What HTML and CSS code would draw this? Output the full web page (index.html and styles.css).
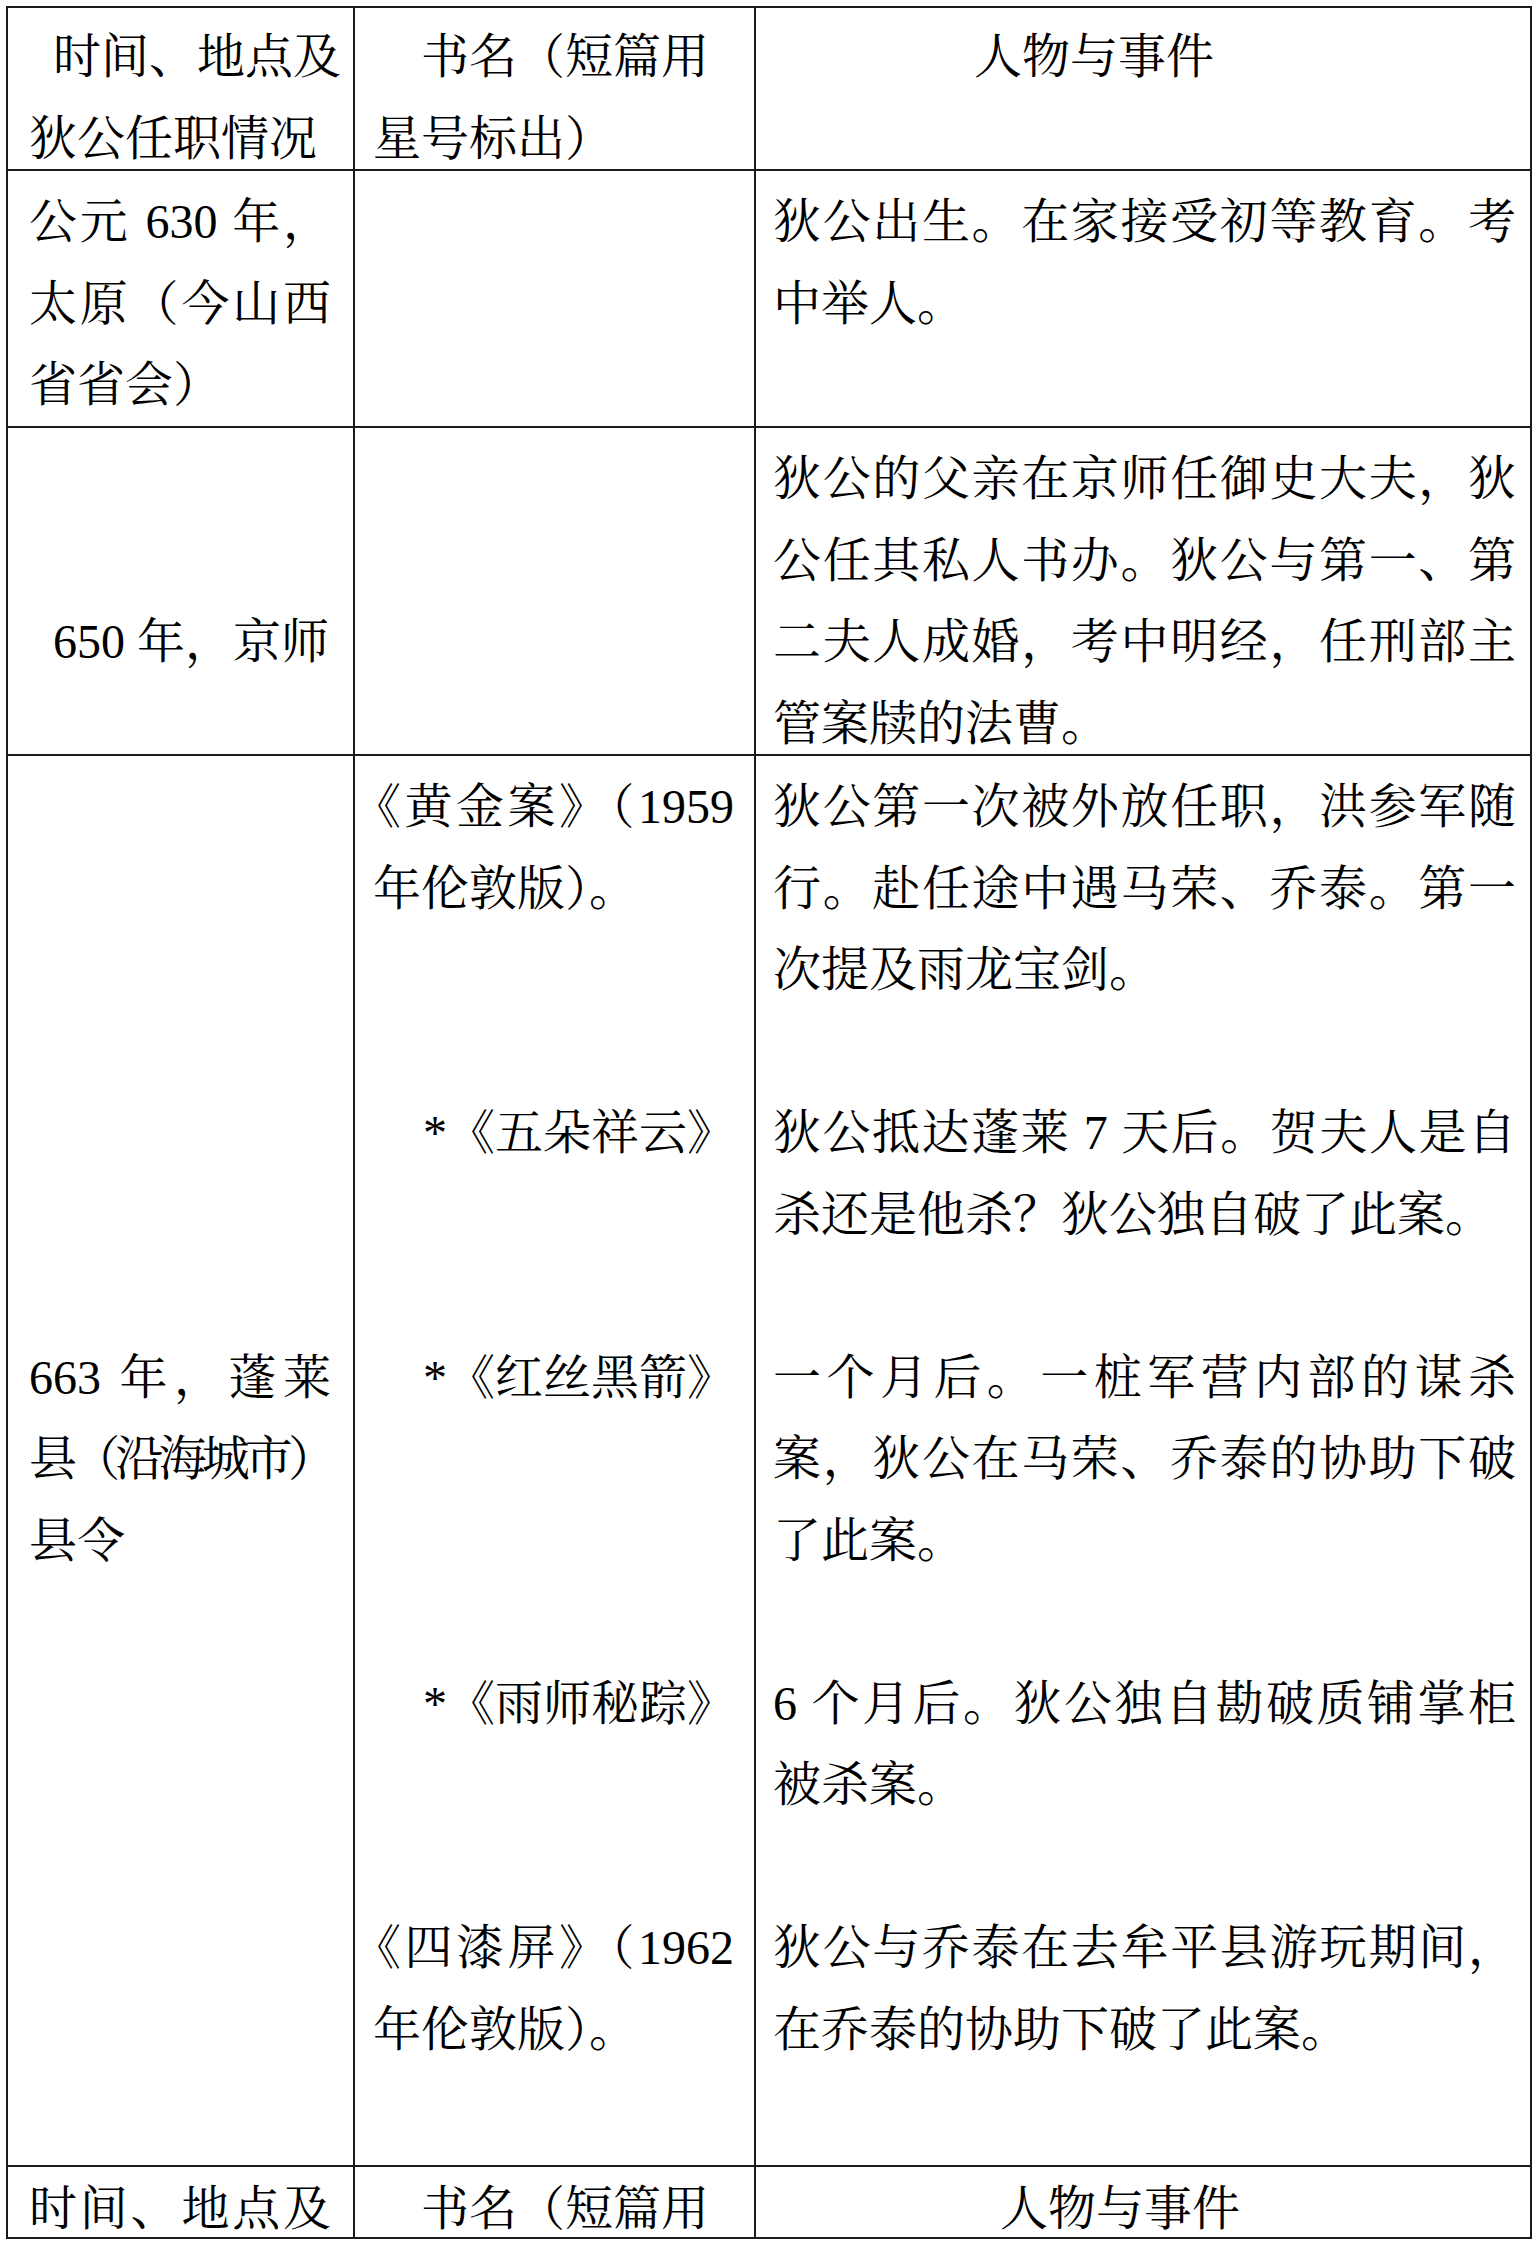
FILE: index.html
```html
<!DOCTYPE html>
<html lang="zh-CN">
<head>
<meta charset="utf-8">
<title>狄公年表</title>
<link rel="stylesheet" href="styles.css">
</head>
<body>
<table class="chron">
  <colgroup>
    <col class="w1">
    <col class="w2">
    <col class="w3">
  </colgroup>
  <tr class="r-head">
    <td class="col1"><div class="cell"><span class="ind-half">时间、地点及</span><br>狄公任职情况</div></td>
    <td class="col2"><div class="cell"><span class="ind-one">书名（短篇用</span><br>星号标出）</div></td>
    <td class="col3"><div class="cell"><span class="head3">人物与事件</span></div></td>
  </tr>
  <tr class="r-630">
    <td class="col1"><div class="cell">公元 630 年，太原（今山西省省会）</div></td>
    <td class="col2"><div class="cell"></div></td>
    <td class="col3"><div class="cell">狄公出生。在家接受初等教育。考中举人。</div></td>
  </tr>
  <tr class="r-650">
    <td class="col1 c650"><div class="cell"><span class="ind-half">650 年，京师</span></div></td>
    <td class="col2"><div class="cell"></div></td>
    <td class="col3"><div class="cell">狄公的父亲在京师任御史大夫，狄公任其私人书办。狄公与第一、第二夫人成婚，考中明经，任刑部主管案牍的法曹。</div></td>
  </tr>
  <tr class="s s1">
    <td class="col1 c663" rowspan="5">663 年，蓬莱<span class="tight">县（沿海城市）</span>县令</td>
    <td class="col2 hang">《黄金案》（1959 年伦敦版）。</td>
    <td class="col3">狄公第一次被外放任职，洪参军随行。赴任途中遇马荣、乔泰。第一次提及雨龙宝剑。</td>
  </tr>
  <tr class="s s2">
    <td class="col2"><span class="book">*《五朵祥云》</span></td>
    <td class="col3">狄公抵达蓬莱 7 天后。贺夫人是自杀还是他杀？狄公独自破了此案。</td>
  </tr>
  <tr class="s s3">
    <td class="col2"><span class="book">*《红丝黑箭》</span></td>
    <td class="col3">一个月后。一桩军营内部的谋杀案，狄公在马荣、乔泰的协助下破了此案。</td>
  </tr>
  <tr class="s s4">
    <td class="col2"><span class="book">*《雨师秘踪》</span></td>
    <td class="col3">6 个月后。狄公独自勘破质铺掌柜被杀案。</td>
  </tr>
  <tr class="s s5">
    <td class="col2 hang">《四漆屏》（1962 年伦敦版）。</td>
    <td class="col3">狄公与乔泰在去牟平县游玩期间，在乔泰的协助下破了此案。</td>
  </tr>
  <tr class="r-foot">
    <td class="col1"><div class="cell foot1">时间、地点及</div></td>
    <td class="col2"><div class="cell"><span class="ind-one">书名（短篇用</span></div></td>
    <td class="col3"><div class="cell"><span class="foot3">人物与事件</span></div></td>
  </tr>
</table>
</body>
</html>
```

FILE: styles.css
```css
html, body {
  margin: 0;
  padding: 0;
  background: #ffffff;
}

body {
  font-family: "Liberation Serif", "Noto Serif CJK SC", "Noto Sans CJK SC", serif;
  font-size: 48px;
  line-height: 81.5px;
  color: #000000;
}

.chron {
  border-collapse: collapse;
  table-layout: fixed;
  width: 1524px;
  margin: 6px 0 0 6px;
}

.w1 { width: 347px; }
.w2 { width: 401px; }
.w3 { width: 776px; }

.chron td {
  border: 2px solid #1a1a1a;
  padding: 0;
  vertical-align: top;
  text-align: justify;
}

.chron td.col1 { padding-left: 21px; padding-right: 22px; }
.chron td.col2 { padding-left: 18px; padding-right: 20px; }
.chron td.col3 { padding-left: 17px; padding-right: 14px; }

/* opening bracket hangs into the padding, as in the source */
.chron td.hang { text-indent: -20px; }

/* compressed line, as Word squeezes the brackets */
.tight {
  white-space: nowrap;
  letter-spacing: -5px;
}

.ind-half {
  display: inline-block;
  padding-left: 24px;
  white-space: nowrap;
}

.ind-one {
  display: inline-block;
  padding-left: 48px;
  white-space: nowrap;
}

.head3 {
  display: inline-block;
  padding-left: 201px;
}

/* header row */
.r-head td { padding-top: 8px; }
.r-head .cell { height: 153px; }

/* 630 row */
.r-630 td { padding-top: 10px; }
.r-630 .cell { height: 245px; }

/* 650 row */
.r-650 td { padding-top: 10px; }
.r-650 .cell { height: 316px; }
.r-650 td.c650 { padding-top: 173px; }
.r-650 td.c650 .cell { height: 153px; }

/* 663 block, split in sub-rows without inner borders */
.s td.col2,
.s td.col3 { padding-bottom: 81.5px; }

.s1 td { padding-top: 10px; }
.s1 td, .s2 td, .s3 td, .s4 td { border-bottom: none; }
.s2 td, .s3 td, .s4 td, .s5 td { border-top: none; }
.s5 td.col2,
.s5 td.col3 { padding-bottom: 95px; }

.chron td.c663 {
  padding-top: 580.5px;
  border-bottom: 2px solid #1a1a1a;
}

.book {
  display: inline-block;
  padding-left: 50px;
  white-space: nowrap;
}

/* repeated header row at the page end */
.r-foot td { padding-top: 6px; line-height: 72px; }
.r-foot .cell { height: 64px; overflow: hidden; }
.foot1 { text-align-last: justify; }
.foot3 {
  display: inline-block;
  padding-left: 227px;
}
```
